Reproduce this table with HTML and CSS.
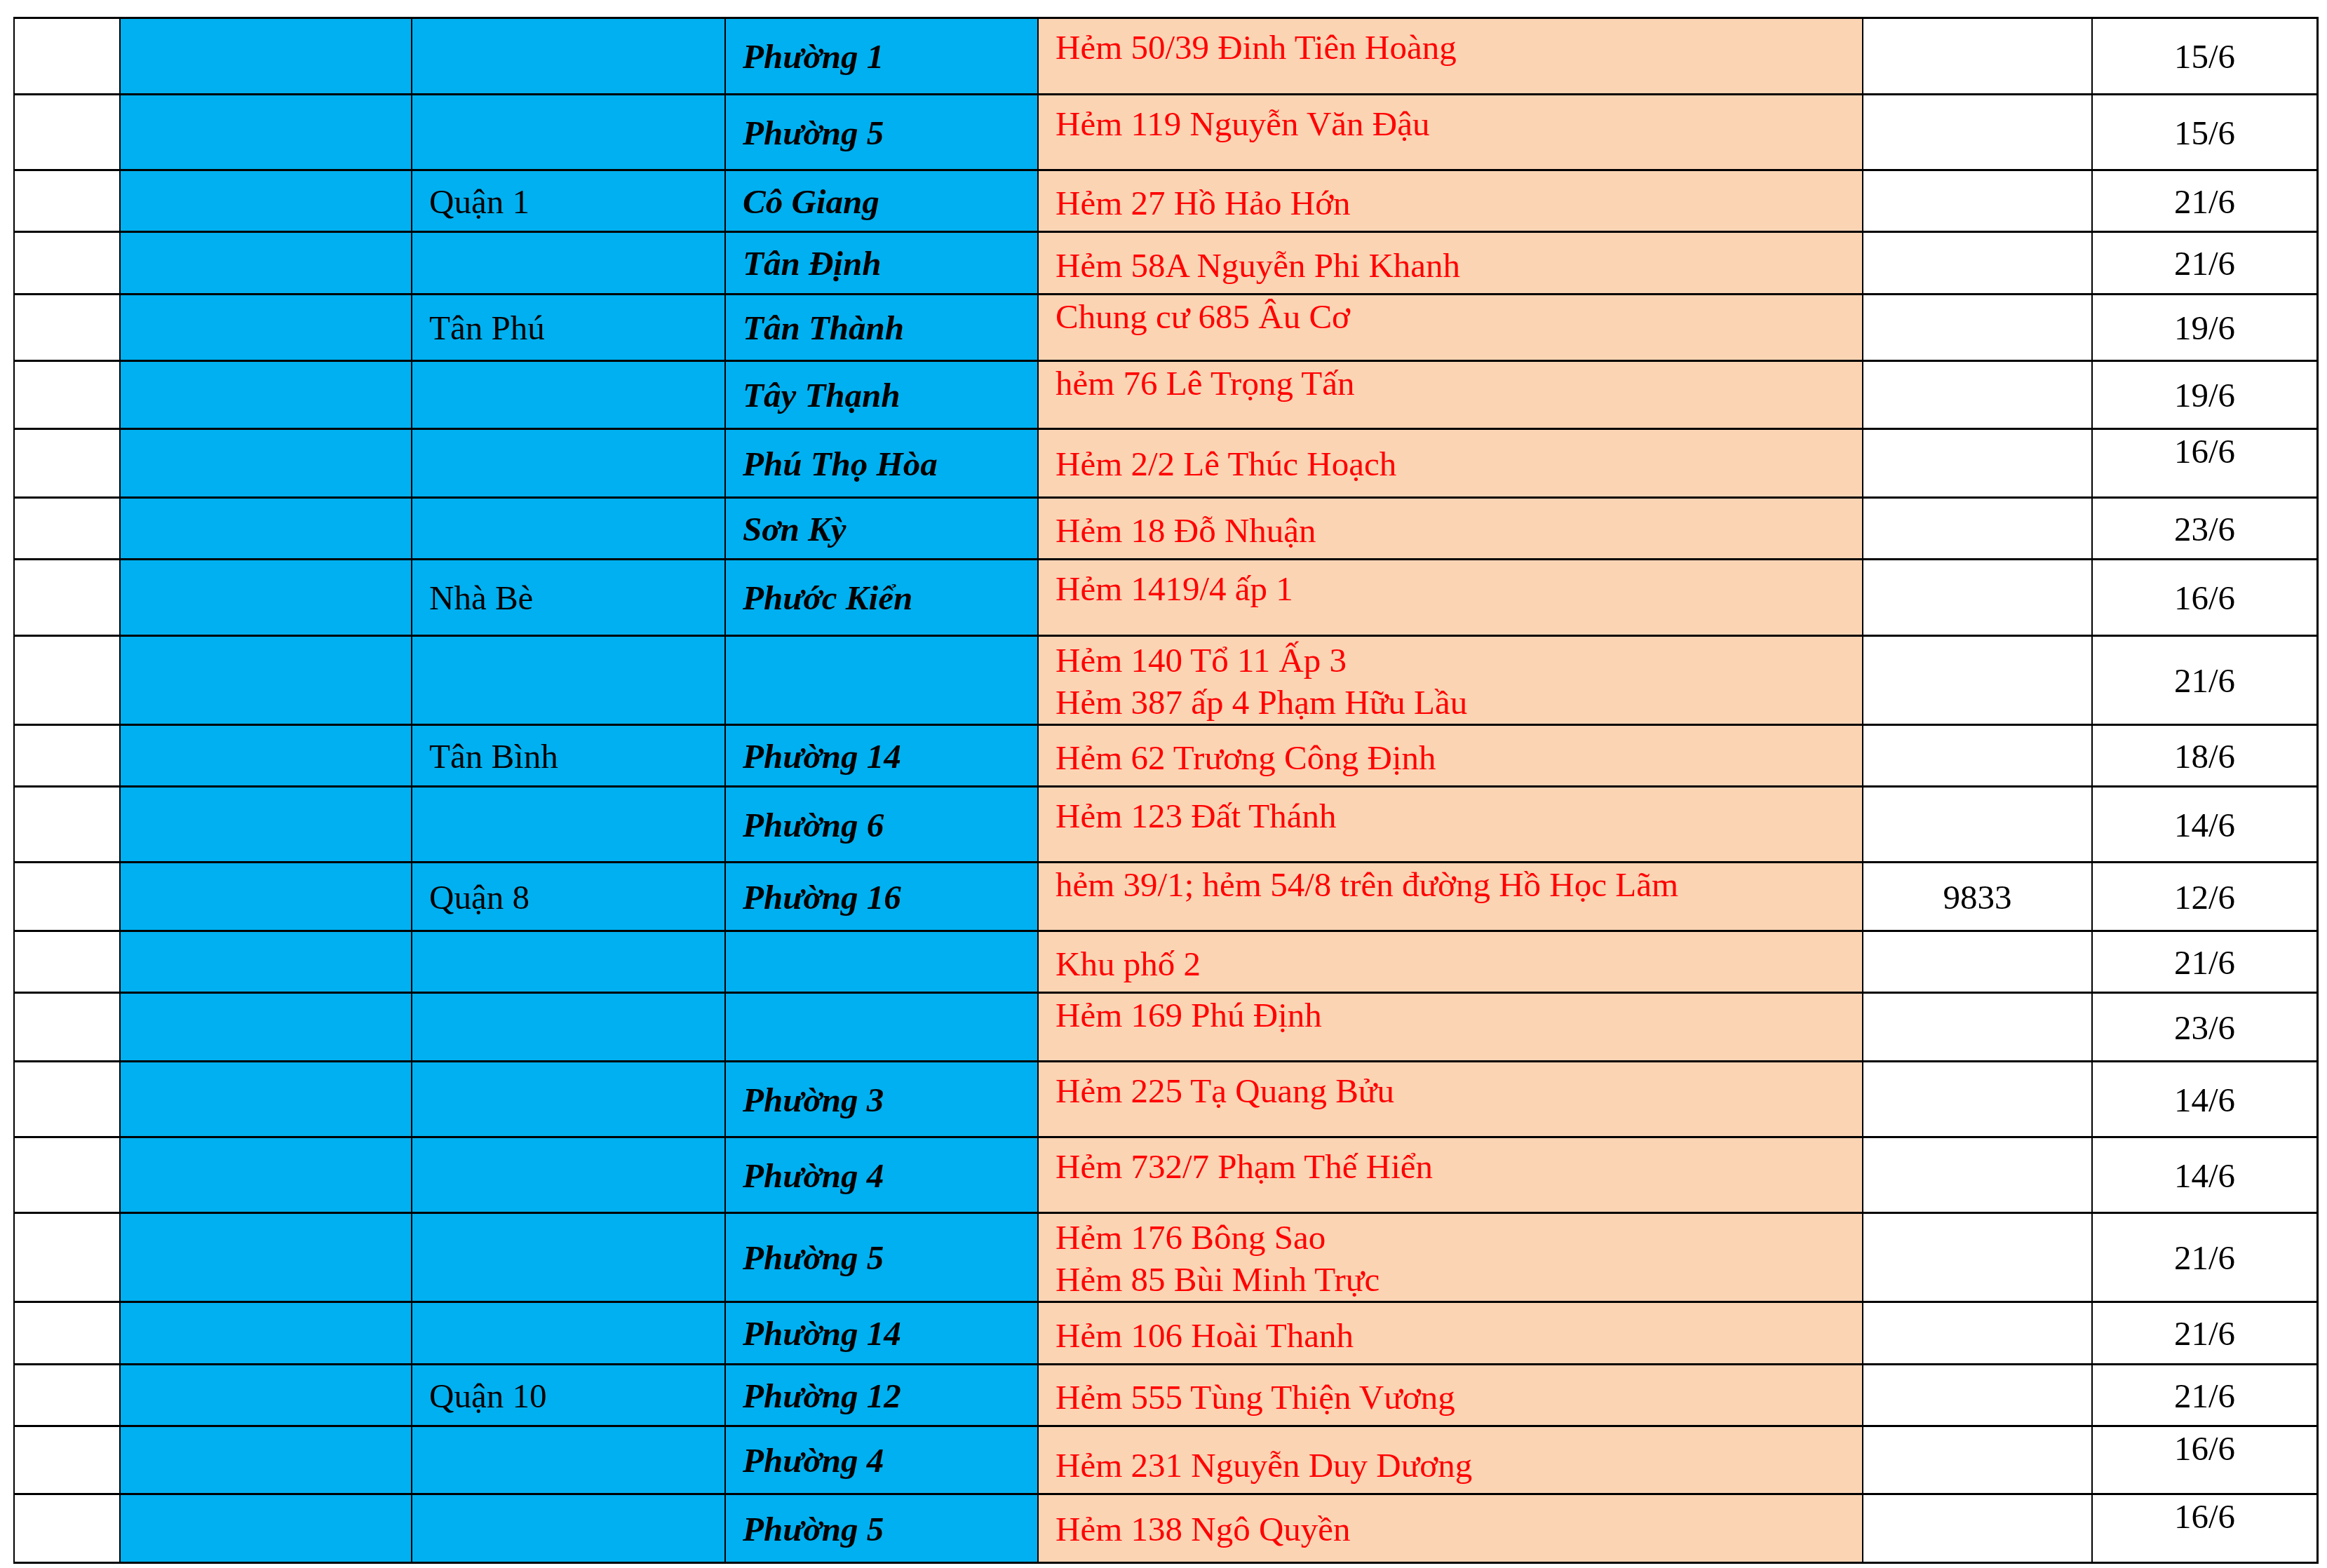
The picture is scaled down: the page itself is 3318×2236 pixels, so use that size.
FILE: index.html
```html
<!DOCTYPE html>
<html lang="vi">
<head>
<meta charset="utf-8">
<title>Danh sách hẻm</title>
<link rel="stylesheet" href="styles.css">
</head>
<body>
<table class="sheet">
  <colgroup>
    <col class="w1"><col class="w2"><col class="w3"><col class="w4"><col class="w5"><col class="w6"><col class="w7">
  </colgroup>
  <tbody>
    <tr class="h109"><td class="c1"></td><td class="c2"></td><td class="c3 m"></td><td class="c4 m">Phường 1</td><td class="c5 t10">Hẻm 50/39 Đinh Tiên Hoàng</td><td class="c6 m"></td><td class="c7 m">15/6</td></tr>
    <tr class="h108"><td class="c1"></td><td class="c2"></td><td class="c3 m"></td><td class="c4 m">Phường 5</td><td class="c5 t10">Hẻm 119 Nguyễn Văn Đậu</td><td class="c6 m"></td><td class="c7 m">15/6</td></tr>
    <tr class="h88"><td class="c1"></td><td class="c2"></td><td class="c3 m">Quận 1</td><td class="c4 m">Cô Giang</td><td class="c5 b">Hẻm 27 Hồ Hảo Hớn</td><td class="c6 m"></td><td class="c7 m">21/6</td></tr>
    <tr class="h89"><td class="c1"></td><td class="c2"></td><td class="c3 m"></td><td class="c4 m">Tân Định</td><td class="c5 b">Hẻm 58A Nguyễn Phi Khanh</td><td class="c6 m"></td><td class="c7 m">21/6</td></tr>
    <tr class="h95"><td class="c1"></td><td class="c2"></td><td class="c3 m">Tân Phú</td><td class="c4 m">Tân Thành</td><td class="c5 t0">Chung cư 685 Âu Cơ</td><td class="c6 m"></td><td class="c7 m">19/6</td></tr>
    <tr class="h97"><td class="c1"></td><td class="c2"></td><td class="c3 m"></td><td class="c4 m">Tây Thạnh</td><td class="c5 t0">hẻm 76 Lê Trọng Tấn</td><td class="c6 m"></td><td class="c7 m">19/6</td></tr>
    <tr class="h98"><td class="c1"></td><td class="c2"></td><td class="c3 m"></td><td class="c4 m">Phú Thọ Hòa</td><td class="c5 m">Hẻm 2/2 Lê Thúc Hoạch</td><td class="c6 m"></td><td class="c7 t0">16/6</td></tr>
    <tr class="h88"><td class="c1"></td><td class="c2"></td><td class="c3 m"></td><td class="c4 m">Sơn Kỳ</td><td class="c5 b">Hẻm 18 Đỗ Nhuận</td><td class="c6 m"></td><td class="c7 m">23/6</td></tr>
    <tr class="h109"><td class="c1"></td><td class="c2"></td><td class="c3 m">Nhà Bè</td><td class="c4 m">Phước Kiển</td><td class="c5 t10">Hẻm 1419/4 ấp 1</td><td class="c6 m"></td><td class="c7 m">16/6</td></tr>
    <tr class="h127"><td class="c1"></td><td class="c2"></td><td class="c3 m"></td><td class="c4 m"></td><td class="c5 two">Hẻm 140 Tổ 11 Ấp 3<br>Hẻm 387 ấp 4 Phạm Hữu Lầu</td><td class="c6 m"></td><td class="c7 m">21/6</td></tr>
    <tr class="h88"><td class="c1"></td><td class="c2"></td><td class="c3 m">Tân Bình</td><td class="c4 m">Phường 14</td><td class="c5 b">Hẻm 62 Trương Công Định</td><td class="c6 m"></td><td class="c7 m">18/6</td></tr>
    <tr class="h108"><td class="c1"></td><td class="c2"></td><td class="c3 m"></td><td class="c4 m">Phường 6</td><td class="c5 t10">Hẻm 123 Đất Thánh</td><td class="c6 m"></td><td class="c7 m">14/6</td></tr>
    <tr class="h98"><td class="c1"></td><td class="c2"></td><td class="c3 m">Quận 8</td><td class="c4 m">Phường 16</td><td class="c5 t0">hẻm 39/1; hẻm 54/8 trên đường Hồ Học Lãm</td><td class="c6 m">9833</td><td class="c7 m">12/6</td></tr>
    <tr class="h88"><td class="c1"></td><td class="c2"></td><td class="c3 m"></td><td class="c4 m"></td><td class="c5 b">Khu phố 2</td><td class="c6 m"></td><td class="c7 m">21/6</td></tr>
    <tr class="h98"><td class="c1"></td><td class="c2"></td><td class="c3 m"></td><td class="c4 m"></td><td class="c5 t0">Hẻm 169 Phú Định</td><td class="c6 m"></td><td class="c7 m">23/6</td></tr>
    <tr class="h108"><td class="c1"></td><td class="c2"></td><td class="c3 m"></td><td class="c4 m">Phường 3</td><td class="c5 t10">Hẻm 225 Tạ Quang Bửu</td><td class="c6 m"></td><td class="c7 m">14/6</td></tr>
    <tr class="h108"><td class="c1"></td><td class="c2"></td><td class="c3 m"></td><td class="c4 m">Phường 4</td><td class="c5 t10">Hẻm 732/7 Phạm Thế Hiển</td><td class="c6 m"></td><td class="c7 m">14/6</td></tr>
    <tr class="h127"><td class="c1"></td><td class="c2"></td><td class="c3 m"></td><td class="c4 m">Phường 5</td><td class="c5 two">Hẻm 176 Bông Sao<br>Hẻm 85 Bùi Minh Trực</td><td class="c6 m"></td><td class="c7 m">21/6</td></tr>
    <tr class="h89"><td class="c1"></td><td class="c2"></td><td class="c3 m"></td><td class="c4 m">Phường 14</td><td class="c5 b">Hẻm 106 Hoài Thanh</td><td class="c6 m"></td><td class="c7 m">21/6</td></tr>
    <tr class="h88"><td class="c1"></td><td class="c2"></td><td class="c3 m">Quận 10</td><td class="c4 m">Phường 12</td><td class="c5 b">Hẻm 555 Tùng Thiện Vương</td><td class="c6 m"></td><td class="c7 m">21/6</td></tr>
    <tr class="h97"><td class="c1"></td><td class="c2"></td><td class="c3 m"></td><td class="c4 m">Phường 4</td><td class="c5 b">Hẻm 231 Nguyễn Duy Dương</td><td class="c6 m"></td><td class="c7 t0">16/6</td></tr>
    <tr class="h98"><td class="c1"></td><td class="c2"></td><td class="c3 m"></td><td class="c4 m">Phường 5</td><td class="c5 m">Hẻm 138 Ngô Quyền</td><td class="c6 m"></td><td class="c7 t0">16/6</td></tr>
  </tbody>
</table>
</body>
</html>
```
FILE: styles.css
```css
html, body {
  margin: 0;
  padding: 0;
  background: #ffffff;
}

body {
  padding: 24px 0 0 19px;
  font-family: "Liberation Serif", "Times New Roman", serif;
  font-size: 49px;
  line-height: 62px;
  color: #000000;
}

.sheet {
  table-layout: fixed;
  border-collapse: separate;
  border-spacing: 0;
  box-sizing: border-box;
  width: 3287px;
  border-top: 3px solid #000;
  border-left: 2px solid #000;
}

.w1 { width: 151px; }
.w2 { width: 416px; }
.w3 { width: 447px; }
.w4 { width: 446px; }
.w5 { width: 1176px; }
.w6 { width: 327px; }
.w7 { width: 322px; }

.sheet td {
  box-sizing: border-box;
  border-right: 2px solid #000;
  border-bottom: 3px solid #000;
  padding: 0 24px;
  white-space: nowrap;
  overflow: hidden;
}

.sheet td:last-child {
  border-right-width: 3px;
}

.h88 { height: 88px; }
.h89 { height: 89px; }
.h95 { height: 95px; }
.h97 { height: 97px; }
.h98 { height: 98px; }
.h108 { height: 108px; }
.h109 { height: 109px; }
.h127 { height: 127px; }

.sheet .c1 { background: #ffffff; }
.sheet .c2 { background: #00b0f0; }
.sheet .c3 { background: #00b0f0; }
.sheet .c4 {
  background: #00b0f0;
  font-weight: bold;
  font-style: italic;
}
.sheet .c5 {
  background: #fbd4b4;
  color: #ff0000;
}
.sheet .c6,
.sheet .c7 {
  background: #ffffff;
  text-align: center;
  padding-left: 0;
  padding-right: 0;
}

.sheet .m {
  vertical-align: middle;
  padding-top: 2px;
}
.sheet .b {
  vertical-align: bottom;
  padding-bottom: 8px;
}
.sheet .t0 {
  vertical-align: top;
  padding-top: 0;
}
.sheet .t10 {
  vertical-align: top;
  padding-top: 10px;
}
.sheet .two {
  vertical-align: top;
  padding-top: 4px;
  line-height: 60px;
}
```
